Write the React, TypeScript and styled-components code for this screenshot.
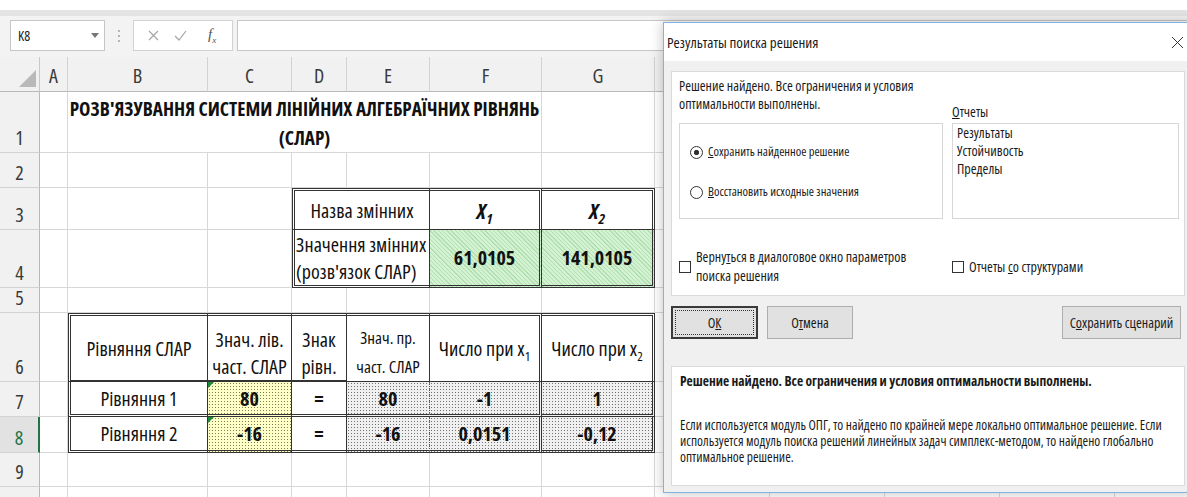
import React from 'react';
import styled, { createGlobalStyle, css } from 'styled-components';

const GlobalStyle = createGlobalStyle`
  html, body { margin: 0; padding: 0; background: #fff; }
  body {
    font-family: "Open Sans", "Liberation Sans", sans-serif;
    font-stretch: 75%;
    color: #111;
  }
  * { box-sizing: border-box; }
`;

type Edge = 'd' | 's' | 'm' | 'o' | undefined;
type Fill = 'yellow' | 'gray' | 'green' | undefined;

const colWidths = [40, 28, 140, 84, 55, 83, 112, 113, 115, 115, 115, 115, 115];
const rowHeights = [35, 61, 35, 42, 58, 25, 69, 35, 36, 34, 34];
// columns H.. sit under the solver window, their letters are never seen
const letters = ['A', 'B', 'C', 'D', 'E', 'F', 'G', '', '', '', '', ''];

const edge = (e: Edge) => {
  if (e === 'd') return '3px double #333';
  if (e === 's') return '1px solid #333';
  if (e === 'm') return '2px solid #333';
  if (e === 'o') return '1px dotted #555';
  return null;
};

const fills = {
  yellow: css`
    background-color: #ffffc8;
    background-image: radial-gradient(circle at 1.5px 1.5px, #7a7a55 0.55px, transparent 0.85px);
    background-size: 3px 3px;
  `,
  gray: css`
    background-color: #f0f0f0;
    background-image: radial-gradient(circle at 1.5px 1.5px, #707070 0.55px, transparent 0.85px);
    background-size: 3px 3px;
  `,
  green: css`
    background: repeating-linear-gradient(45deg, #d2f2d2 0 2px, #b3dfb3 2px 3px);
  `,
};

const Page = styled.div`
  position: relative;
  width: 1187px;
  height: 497px;
  overflow: hidden;
  background: #fff;
`;

const TopStrip = styled.div`
  height: 10px;
  background: #fff;
`;

/* ---------- formula bar ---------- */

const FormulaBar = styled.div`
  height: 47px;
  display: flex;
  align-items: center;
  padding-left: 10px;
  background: linear-gradient(#e4e4e4 0 6px, #f3f3f3 6px);
`;

const NameBox = styled.div`
  width: 95px;
  height: 31px;
  margin-top: 4px;
  background: #fff;
  border: 1px solid #c6c6c6;
  display: flex;
  align-items: center;
  justify-content: space-between;
  padding: 0 5px 0 7px;
  font-size: 14px;
  color: #222;
`;

const Separator = styled.div`
  width: 4px;
  margin: 4px 11px 0 13px;
  display: flex;
  flex-direction: column;
  gap: 3px;
  span {
    width: 2px;
    height: 2px;
    background: #b4b4b4;
  }
`;

const FxBox = styled.div`
  width: 100px;
  height: 31px;
  margin-top: 4px;
  background: #fff;
  border: 1px solid #d2d2d2;
  display: flex;
  align-items: center;
  padding-left: 14px;
  gap: 15px;
`;

const FxText = styled.span`
  font-family: "Liberation Serif", serif;
  font-style: italic;
  font-size: 15px;
  color: #555;
  margin-left: 6px;
  sub { font-size: 9px; }
`;

const FormulaInput = styled.div`
  flex: 1;
  height: 31px;
  margin: 4px 0 0 4px;
  background: #fff;
  border: 1px solid #c6c6c6;
  border-right: none;
`;

/* ---------- sheet ---------- */

const Sheet = styled.div`
  display: grid;
  grid-template-columns: ${colWidths.map((w) => `${w}px`).join(' ')};
  grid-template-rows: ${rowHeights.map((h) => `${h}px`).join(' ')};
  font-size: 20px;
  line-height: 27px;
`;

const Corner = styled.div`
  background: #f1f1f1;
  border-right: 1px solid #c8c8c8;
  border-bottom: 1px solid #b8b8b8;
  display: flex;
  align-items: flex-end;
  justify-content: flex-end;
  padding: 0 3px 4px 0;
`;

const ColHead = styled.div`
  background: #f1f1f1;
  border-right: 1px solid #d2d2d2;
  border-bottom: 1px solid #b8b8b8;
  display: flex;
  align-items: center;
  justify-content: center;
  color: #3a3a3a;
  padding-top: 2px;
`;

const RowHead = styled.div<{ $sel?: boolean }>`
  background: ${(p) => (p.$sel ? '#e2e2e2' : '#f1f1f1')};
  border-bottom: 1px solid #d2d2d2;
  border-right: ${(p) => (p.$sel ? '2px solid #217346' : '1px solid #b8b8b8')};
  color: ${(p) => (p.$sel ? '#217346' : '#3a3a3a')};
  display: flex;
  align-items: flex-end;
  justify-content: center;
  padding-bottom: 1px;
`;

interface CellProps {
  $c: number;
  $r: number;
  $span?: number;
  $t?: Edge;
  $l?: Edge;
  $rt?: Edge;
  $b?: Edge;
  $fill?: Fill;
  $align?: 'left' | 'center';
  $v?: 'center' | 'end';
  $bold?: boolean;
  $small?: boolean;
  $title?: boolean;
  $flag?: boolean;
}

const Cell = styled.div<CellProps>`
  grid-column: ${(p) => p.$c + 2} / span ${(p) => p.$span || 1};
  grid-row: ${(p) => p.$r + 1};
  position: relative;
  display: flex;
  flex-direction: column;
  justify-content: ${(p) => (p.$v === 'end' ? 'flex-end' : 'center')};
  align-items: ${(p) => (p.$align === 'left' ? 'flex-start' : 'center')};
  text-align: ${(p) => p.$align || 'center'};
  padding-left: ${(p) => (p.$align === 'left' ? '1px' : '0')};
  white-space: nowrap;
  font-weight: ${(p) => (p.$bold ? 700 : 400)};
  font-size: ${(p) => (p.$small ? '17px' : p.$title ? '19.2px' : '20px')};
  line-height: ${(p) => (p.$small ? '29px' : p.$title ? '29px' : '27px')};
  border-top: ${(p) => edge(p.$t) || 'none'};
  border-left: ${(p) => edge(p.$l) || 'none'};
  border-right: ${(p) => edge(p.$rt) || '1px solid #d8d8d8'};
  border-bottom: ${(p) => edge(p.$b) || '1px solid #d8d8d8'};
  ${(p) => p.$fill && fills[p.$fill]}

  sub { font-size: 13px; line-height: 0; }

  ${(p) =>
    p.$flag &&
    css`
      &::before {
        content: '';
        position: absolute;
        top: 0;
        left: 0;
        border-top: 6px solid #1e8a3c;
        border-right: 6px solid transparent;
      }
    `}
`;

const VarName = styled.span`
  font-weight: 700;
  font-style: italic;
  font-size: 22px;
  sub { font-size: 15px; }
`;

interface Spec extends Omit<CellProps, '$c' | '$r'> {
  c: number;
  r: number;
  body: React.ReactNode;
}

const eqRow = (r: number, label: string, vals: string[]): Spec[] => [
  { c: 1, r, $l: 'd', $rt: 's', $b: 'd', body: label },
  { c: 2, r, $rt: 's', $b: 'd', $fill: 'yellow', $bold: true, $flag: true, body: vals[0] },
  { c: 3, r, $rt: 's', $b: 'd', $bold: true, body: '=' },
  { c: 4, r, $rt: 'o', $b: 'd', $fill: 'gray', $bold: true, body: vals[1] },
  { c: 5, r, $rt: 'd', $b: 'd', $fill: 'gray', $bold: true, body: vals[2] },
  { c: 6, r, $rt: 'd', $b: 'd', $fill: 'gray', $bold: true, body: vals[3] },
];

const cells: Spec[] = [
  {
    c: 1, r: 1, $span: 5, $bold: true, $title: true, $v: 'end',
    body: (
      <>
        <span>РОЗВ'ЯЗУВАННЯ СИСТЕМИ ЛІНІЙНИХ АЛГЕБРАЇЧНИХ РІВНЯНЬ</span>
        <span>(СЛАР)</span>
      </>
    ),
  },
  { c: 3, r: 3, $span: 2, $t: 'd', $l: 'd', $rt: 's', $b: 's', body: 'Назва змінних' },
  { c: 5, r: 3, $t: 'd', $rt: 'd', $b: 's', body: <VarName>X<sub>1</sub></VarName> },
  { c: 6, r: 3, $t: 'd', $rt: 'd', $b: 's', body: <VarName>X<sub>2</sub></VarName> },
  {
    c: 3, r: 4, $span: 2, $l: 'd', $rt: 's', $b: 'd', $align: 'left',
    body: (
      <>
        <span>Значення змінних</span>
        <span>(розв'язок СЛАР)</span>
      </>
    ),
  },
  { c: 5, r: 4, $rt: 'd', $b: 'd', $fill: 'green', $bold: true, body: '61,0105' },
  { c: 6, r: 4, $rt: 'd', $b: 'd', $fill: 'green', $bold: true, body: '141,0105' },
  { c: 1, r: 6, $t: 'd', $l: 'd', $rt: 's', $b: 'm', body: 'Рівняння СЛАР' },
  {
    c: 2, r: 6, $t: 'd', $rt: 's', $b: 'm', $v: 'end',
    body: (
      <>
        <span>Знач. лів.</span>
        <span>част. СЛАР</span>
      </>
    ),
  },
  {
    c: 3, r: 6, $t: 'd', $rt: 's', $b: 'm', $v: 'end',
    body: (
      <>
        <span>Знак</span>
        <span>рівн.</span>
      </>
    ),
  },
  {
    c: 4, r: 6, $t: 'd', $rt: 's', $b: 's', $v: 'end', $small: true,
    body: (
      <>
        <span>Знач. пр.</span>
        <span>част. СЛАР</span>
      </>
    ),
  },
  { c: 5, r: 6, $t: 'd', $rt: 'd', $b: 's', body: <span>Число при x<sub>1</sub></span> },
  { c: 6, r: 6, $t: 'd', $rt: 'd', $b: 's', body: <span>Число при x<sub>2</sub></span> },
  ...eqRow(7, 'Рівняння 1', ['80', '80', '-1', '1']),
  ...eqRow(8, 'Рівняння 2', ['-16', '-16', '0,0151', '-0,12']),
];

const covered = new Set<string>();
cells.forEach((s) => {
  for (let i = 0; i < (s.$span || 1); i++) covered.add(`${s.c + i}:${s.r}`);
});

/* ---------- solver dialog ---------- */

const Dialog = styled.div`
  position: absolute;
  left: 663px;
  top: 22px;
  width: 530px;
  height: 471px;
  background: #f0f0f0;
  border: 1px solid #7fb3e6;
  box-shadow: 0 0 12px rgba(0, 0, 0, 0.25);
  display: flex;
  flex-direction: column;
  font-size: 14px;
  color: #1a1a1a;
  white-space: nowrap;
`;

const TitleBar = styled.div`
  height: 38px;
  flex-shrink: 0;
  background: #fff;
  display: flex;
  align-items: center;
  justify-content: space-between;
  padding: 0 8px 0 3px;
  font-size: 15px;
`;

const DialogBody = styled.div`
  flex: 1;
  padding: 10px 7px 7px;
  display: flex;
  flex-direction: column;
`;

const Panel = styled.div<{ $h: number }>`
  height: ${(p) => p.$h}px;
  flex-shrink: 0;
  background: #fff;
  border: 1px solid #dadada;
`;

const OptionsPanel = styled(Panel)`
  padding: 5px 5px 0 7px;
  display: grid;
  grid-template-columns: 264px 1fr;
  grid-template-rows: 44px 96px auto;
  column-gap: 9px;
  row-gap: 2px;
`;

const Intro = styled.div`
  line-height: 18px;
`;

const ListLabel = styled.div`
  align-self: end;
  line-height: 18px;
`;

const Box = styled.div`
  border: 1px solid #d6d6d6;
  display: flex;
  flex-direction: column;
`;

const RadioBox = styled(Box)`
  padding: 19px 0 0 10px;
  gap: 22px;
`;

const Radio = styled.div<{ $on?: boolean }>`
  display: flex;
  align-items: center;
  gap: 5px;
  font-size: 12.5px;
  line-height: 18px;
  &::before {
    content: '';
    width: 11px;
    height: 11px;
    border-radius: 50%;
    border: 1px solid #333;
    background: ${(p) =>
      p.$on ? 'radial-gradient(circle, #333 0 2.4px, #fff 2.9px)' : '#fff'};
  }
`;

const ReportList = styled(Box)`
  padding-left: 4px;
  line-height: 18px;
`;

const CheckRow = styled.div`
  margin-top: 16px;
  display: flex;
  align-items: center;
  gap: 5px;
  line-height: 19px;
`;

const CheckBox = styled.span`
  width: 12px;
  height: 12px;
  flex-shrink: 0;
  border: 1px solid #333;
  background: #fff;
  margin-top: 1px;
`;

const ButtonRow = styled.div`
  margin: 10px 4px 0 0;
  display: flex;
  gap: 9px;
`;

const Button = styled.div<{ $w: number; $default?: boolean; $push?: boolean }>`
  position: relative;
  width: ${(p) => p.$w}px;
  height: 33px;
  margin-left: ${(p) => (p.$push ? 'auto' : '0')};
  background: #e1e1e1;
  border: ${(p) => (p.$default ? '2px solid #3a3a3a' : '1px solid #adadad')};
  display: flex;
  align-items: center;
  justify-content: center;
  ${(p) =>
    p.$default &&
    css`
      &::after {
        content: '';
        position: absolute;
        inset: 2px;
        border: 1px dotted #333;
      }
    `}
`;

const MessagePanel = styled(Panel)`
  margin-top: 27px;
  padding: 5px 8px 0 8px;
  font-size: 13.5px;
`;

const MessageTitle = styled.div`
  font-weight: 700;
  line-height: 19px;
`;

const MessageText = styled.div`
  margin-top: 26px;
  line-height: 16px;
`;

export default function App() {
  return (
    <Page>
      <GlobalStyle />
      <TopStrip />
      <FormulaBar>
        <NameBox>
          K8
          <svg width="8" height="5" viewBox="0 0 8 5">
            <path d="M0 0 L8 0 L4 5 Z" fill="#777" />
          </svg>
        </NameBox>
        <Separator>
          <span />
          <span />
          <span />
        </Separator>
        <FxBox>
          <svg width="11" height="11" viewBox="0 0 11 11">
            <path d="M1 1 L10 10 M10 1 L1 10" stroke="#a6a6a6" strokeWidth="1.2" />
          </svg>
          <svg width="13" height="11" viewBox="0 0 13 11">
            <path d="M1 6 L5 10 L12 1" stroke="#a6a6a6" strokeWidth="1.2" fill="none" />
          </svg>
          <FxText>
            f<sub>x</sub>
          </FxText>
        </FxBox>
        <FormulaInput />
      </FormulaBar>

      <Sheet>
        <Corner>
          <svg width="17" height="17" viewBox="0 0 17 17">
            <path d="M17 0 L17 17 L0 17 Z" fill="#b9b9b9" />
          </svg>
        </Corner>
        {letters.map((l, i) => (
          <ColHead key={i}>{l}</ColHead>
        ))}
        {rowHeights.slice(1).map((_, i) => {
          const r = i + 1;
          return (
            <React.Fragment key={r}>
              <RowHead $sel={r === 8} style={{ gridRow: r + 1, gridColumn: 1 }}>
                {r}
              </RowHead>
              {letters.map((_, c) =>
                covered.has(`${c}:${r}`) ? null : <Cell key={c} $c={c} $r={r} />
              )}
            </React.Fragment>
          );
        })}
        {cells.map(({ c, r, body, ...rest }) => (
          <Cell key={`${c}-${r}`} $c={c} $r={r} {...rest}>
            {body}
          </Cell>
        ))}
      </Sheet>

      <Dialog>
        <TitleBar>
          <span>Результаты поиска решения</span>
          <svg width="13" height="13" viewBox="0 0 13 13">
            <path d="M1 1 L12 12 M12 1 L1 12" stroke="#333" strokeWidth="1" />
          </svg>
        </TitleBar>
        <DialogBody>
          <OptionsPanel $h={225}>
            <Intro>
              Решение найдено. Все ограничения и условия
              <br />
              оптимальности выполнены.
            </Intro>
            <ListLabel>
              <u>О</u>тчеты
            </ListLabel>
            <RadioBox>
              <Radio $on>
                <span>
                  <u>С</u>охранить найденное решение
                </span>
              </Radio>
              <Radio>
                <span>
                  <u>В</u>осстановить исходные значения
                </span>
              </Radio>
            </RadioBox>
            <ReportList>
              <span>Результаты</span>
              <span>Устойчивость</span>
              <span>Пределы</span>
            </ReportList>
            <CheckRow>
              <CheckBox />
              <span>
                Верну<u>т</u>ься в диалоговое окно параметров
                <br />
                поиска решения
              </span>
            </CheckRow>
            <CheckRow>
              <CheckBox />
              <span>
                Отчеты <u>с</u>о структурами
              </span>
            </CheckRow>
          </OptionsPanel>

          <ButtonRow>
            <Button $w={87} $default>
              <span>
                О<u>К</u>
              </span>
            </Button>
            <Button $w={86}>
              <span>
                О<u>т</u>мена
              </span>
            </Button>
            <Button $w={119} $push>
              <span>
                С<u>о</u>хранить сценарий
              </span>
            </Button>
          </ButtonRow>

          <MessagePanel $h={120}>
            <MessageTitle>
              Решение найдено. Все ограничения и условия оптимальности выполнены.
            </MessageTitle>
            <MessageText>
              Если используется модуль ОПГ, то найдено по крайней мере локально оптимальное решение. Если
              <br />
              используется модуль поиска решений линейных задач симплекс-методом, то найдено глобально
              <br />
              оптимальное решение.
            </MessageText>
          </MessagePanel>
        </DialogBody>
      </Dialog>
    </Page>
  );
}
